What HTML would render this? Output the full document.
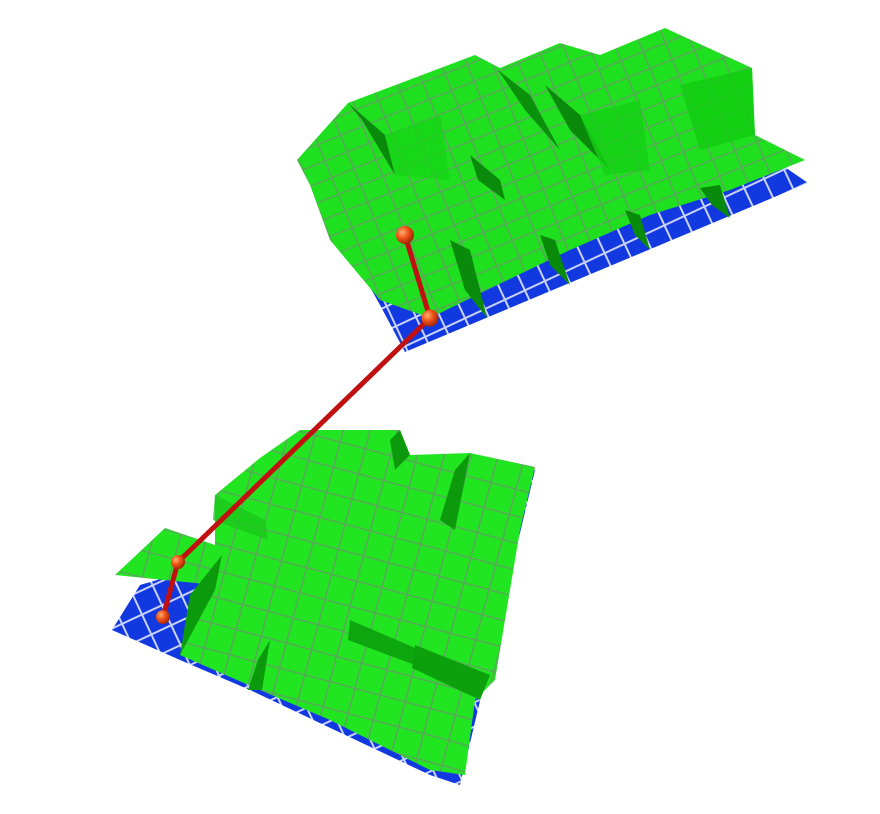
<!DOCTYPE html>
<html><head><meta charset="utf-8"><style>html,body{margin:0;padding:0;background:#fff;width:880px;height:814px;overflow:hidden}</style></head>
<body>
<svg width="880" height="814" viewBox="0 0 880 814" xmlns="http://www.w3.org/2000/svg">
<defs>
<radialGradient id="sp" cx="35%" cy="35%" r="65%"><stop offset="0" stop-color="#ffb070"/><stop offset="0.5" stop-color="#f0541a"/><stop offset="1" stop-color="#a82a05"/></radialGradient>
<pattern id="grid" width="22" height="22" patternUnits="userSpaceOnUse" patternTransform="rotate(-25)"><rect width="22" height="22" fill="#1238e0"/><path d="M0 1H22M1 0V22" stroke="#c8d2ff" stroke-width="2"/></pattern>
<pattern id="gg" width="24" height="18" patternUnits="userSpaceOnUse" patternTransform="rotate(-22)"><rect width="24" height="18" fill="#1fe01f"/><path d="M0 1H24M1 0V18" stroke="#58a858" stroke-width="1.6"/></pattern>
<pattern id="gg2" width="26" height="26" patternUnits="userSpaceOnUse" patternTransform="rotate(15)"><rect width="26" height="26" fill="#22e522"/><path d="M0 1H26M1 0V26" stroke="#58a858" stroke-width="1.6"/></pattern>
</defs>
<polygon points="310,180 760,150 808,183 405,352 380,305" fill="url(#grid)"/>
<polygon points="297,160 348,103 475,55 500,68 560,43 600,55 665,28 752,68 755,135 805,160 730,190 650,215 570,250 487,290 430,318 380,300 330,240 310,185" fill="url(#gg)"/>
<polygon points="348,103 362,120 395,175 385,135" fill="#0a8a0a"/>
<polygon points="498,70 530,95 560,150 525,110" fill="#0a900a"/>
<polygon points="545,85 580,115 610,170 570,130" fill="#0a8a0a"/>
<polygon points="680,85 752,68 755,135 700,150" fill="#12cc12" opacity="0.85"/>
<polygon points="580,115 640,100 650,170 605,175" fill="#15d015" opacity="0.8"/>
<polygon points="385,135 440,115 450,180 395,175" fill="#17d317" opacity="0.8"/>
<polygon points="450,240 470,250 487,318 465,290" fill="#0a8a0a"/>
<polygon points="540,235 555,240 570,285 550,265" fill="#0a8a0a"/>
<polygon points="625,210 640,215 650,250 635,235" fill="#0a8a0a"/>
<polygon points="700,188 720,185 730,218 712,205" fill="#0a8a0a"/>
<polygon points="470,155 500,180 505,200 478,180" fill="#0a8a0a"/>
<polygon points="112,630 140,585 535,470 460,785 430,775 250,690 180,660" fill="url(#grid)"/>
<polygon points="115,575 165,528 215,545 215,495 260,458 300,430 400,430 410,455 470,453 535,467 520,530 495,680 475,700 465,775 430,770 390,750 330,720 260,690 180,655 215,585" fill="url(#gg2)"/>
<polygon points="400,430 410,455 395,470 390,440" fill="#0c9a0c"/>
<polygon points="455,470 470,453 455,530 440,520" fill="#0c9a0c"/>
<polygon points="350,620 420,650 415,665 348,640" fill="#0ea60e"/>
<polygon points="415,645 490,675 480,700 412,668" fill="#0ca00c"/>
<polygon points="190,595 222,555 215,590 180,655" fill="#0b9a0b"/>
<polygon points="258,660 270,640 262,690 248,690" fill="#0b9a0b"/>
<polygon points="215,495 265,520 268,540 213,520" fill="#1bc81b" opacity="0.8"/>
<polyline points="405,235 430,318 178,562 163,617" fill="none" stroke="#c01010" stroke-width="5" stroke-linejoin="round"/>
<circle cx="405" cy="235" r="9" fill="url(#sp)"/>
<circle cx="430" cy="318" r="8.5" fill="url(#sp)"/>
<circle cx="178" cy="562" r="7" fill="url(#sp)"/>
<circle cx="163" cy="617" r="7" fill="url(#sp)"/>
</svg>
</body></html>
